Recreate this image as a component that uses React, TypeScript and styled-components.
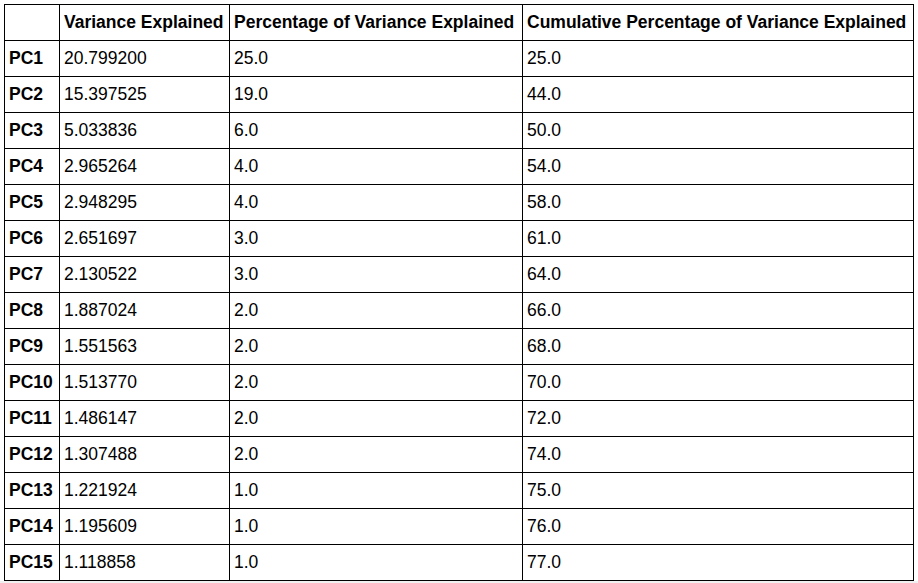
import React from 'react';
import styled, { createGlobalStyle } from 'styled-components';

const GlobalStyle = createGlobalStyle`
    html, body {
        margin: 0;
        padding: 0;
        background: #ffffff;
    }
    body {
        font-family: "Liberation Sans", Arial, sans-serif;
        color: #000000;
    }
`;

interface PcRow {
    name: string;
    variance: string;
    percent: string;
    cumulative: string;
}

const rows: PcRow[] = [
    { name: 'PC1', variance: '20.799200', percent: '25.0', cumulative: '25.0' },
    { name: 'PC2', variance: '15.397525', percent: '19.0', cumulative: '44.0' },
    { name: 'PC3', variance: '5.033836', percent: '6.0', cumulative: '50.0' },
    { name: 'PC4', variance: '2.965264', percent: '4.0', cumulative: '54.0' },
    { name: 'PC5', variance: '2.948295', percent: '4.0', cumulative: '58.0' },
    { name: 'PC6', variance: '2.651697', percent: '3.0', cumulative: '61.0' },
    { name: 'PC7', variance: '2.130522', percent: '3.0', cumulative: '64.0' },
    { name: 'PC8', variance: '1.887024', percent: '2.0', cumulative: '66.0' },
    { name: 'PC9', variance: '1.551563', percent: '2.0', cumulative: '68.0' },
    { name: 'PC10', variance: '1.513770', percent: '2.0', cumulative: '70.0' },
    { name: 'PC11', variance: '1.486147', percent: '2.0', cumulative: '72.0' },
    { name: 'PC12', variance: '1.307488', percent: '2.0', cumulative: '74.0' },
    { name: 'PC13', variance: '1.221924', percent: '1.0', cumulative: '75.0' },
    { name: 'PC14', variance: '1.195609', percent: '1.0', cumulative: '76.0' },
    { name: 'PC15', variance: '1.118858', percent: '1.0', cumulative: '77.0' },
];

const columnWidths = [55, 170, 293, 391];

export const App: React.FC = (): React.ReactElement => {
    return (
        <>
            <GlobalStyle />
            <Page>
                <Table>
                    <colgroup>
                        {columnWidths.map((w, i) => <Col key={i} width={w} />)}
                    </colgroup>
                    <thead>
                        <tr>
                            <HeadCell />
                            <HeadCell>Variance Explained</HeadCell>
                            <HeadCell>Percentage of Variance Explained</HeadCell>
                            <HeadCell>Cumulative Percentage of Variance Explained</HeadCell>
                        </tr>
                    </thead>
                    <tbody>
                        {rows.map((row) => (
                            <tr key={row.name}>
                                <RowHead>{row.name}</RowHead>
                                <Cell>{row.variance}</Cell>
                                <Cell>{row.percent}</Cell>
                                <Cell>{row.cumulative}</Cell>
                            </tr>
                        ))}
                    </tbody>
                </Table>
            </Page>
        </>
    );
};

const Page = styled.div`
    padding: 4px 0 0 4px;
    height: 583px;
    box-sizing: border-box;
    border-bottom: 2px solid #f0f0f0;
`;

const Table = styled.table`
    border-collapse: collapse;
    table-layout: fixed;
    width: 910px;
    font-size: 17.5px;
`;

const Col = styled.col<{ width: number }>`
    width: ${(p) => p.width}px;
`;

const Cell = styled.td`
    border: 1px solid #000000;
    height: 36px;
    padding: 0 4px;
    text-align: left;
    white-space: nowrap;
    box-sizing: border-box;
`;

const HeadCell = styled.th`
    border: 1px solid #000000;
    height: 36px;
    padding: 0 4px;
    text-align: left;
    font-weight: bold;
    white-space: nowrap;
    box-sizing: border-box;
`;

const RowHead = styled(HeadCell)``;

export default App;
